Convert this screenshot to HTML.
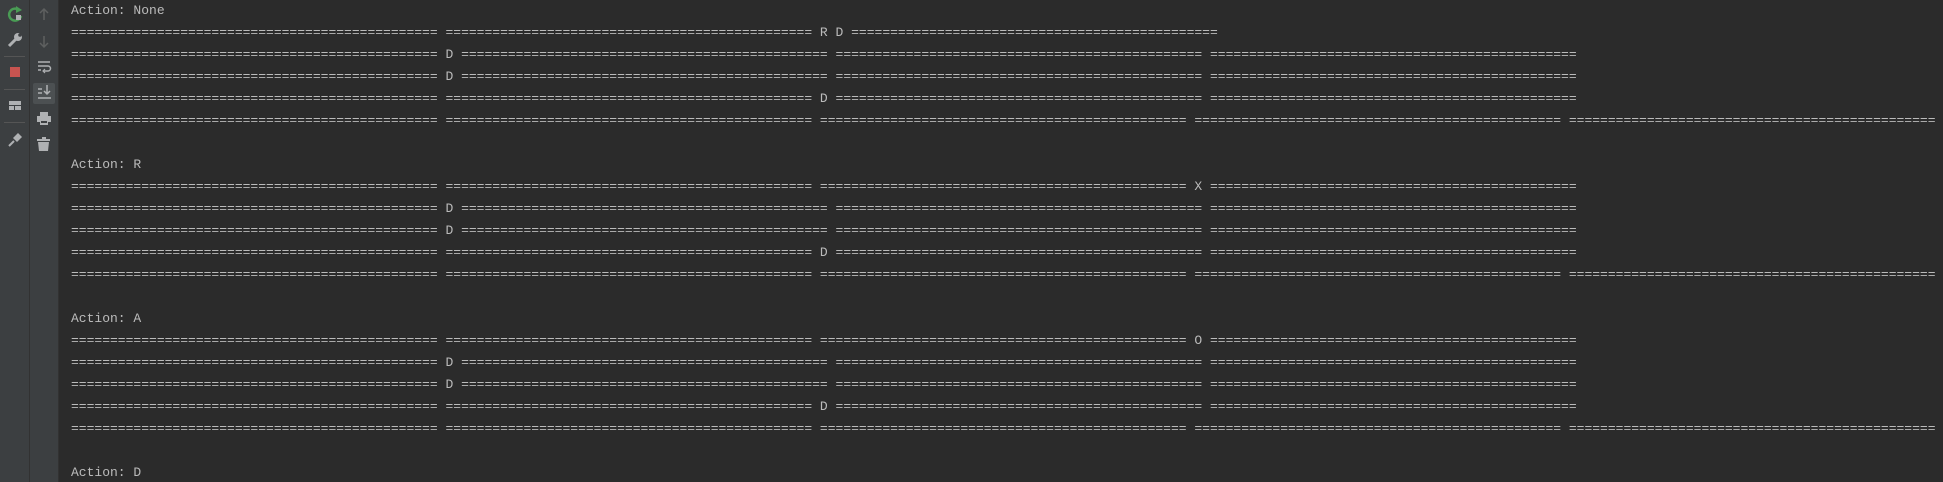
<!DOCTYPE html><html><head><style>
body{margin:0;width:1943px;height:482px;background:#2b2b2b;overflow:hidden;position:relative}
.b1{position:absolute;left:0;top:0;width:29px;height:482px;background:#3c3f41;border-right:1px solid #323232}
.b2{position:absolute;left:30px;top:0;width:28px;height:482px;background:#3c3f41;border-right:1px solid #323232}
pre{position:absolute;left:71px;top:0;width:1872px;height:482px;overflow:hidden;margin:0;font:13px/22px "Liberation Mono",monospace;color:#bbbbbb;white-space:pre}
svg{position:absolute;left:0;top:0}
</style></head><body>
<div class="b1"></div><div class="b2"></div>
<svg width="60" height="160">
<path d="M19 10 A6 6 0 1 0 21 16" stroke="#499c54" stroke-width="2.5" fill="none"/><path d="M16 6 L22 10 L16 13Z" fill="#499c54"/><rect x="16" y="15" width="5" height="5" fill="#afb1b3"/>
<path d="M9 46 L16 39" stroke="#afb1b3" stroke-width="3"/><circle cx="18" cy="37" r="4" fill="#afb1b3"/><circle cx="20" cy="35" r="1.8" fill="#3c3f41"/>
<rect x="4" y="56" width="21" height="1" fill="#555"/>
<rect x="10" y="67" width="10" height="10" fill="#c75450"/>
<rect x="4" y="89" width="21" height="1" fill="#555"/>
<rect x="9" y="101" width="12" height="4" fill="#afb1b3"/><rect x="9" y="106" width="5" height="4" fill="#afb1b3"/><rect x="15" y="106" width="6" height="4" fill="#afb1b3"/>
<rect x="4" y="122" width="21" height="1" fill="#555"/>
<path d="M9 146 L14 141" stroke="#afb1b3" stroke-width="2"/><path d="M13 138 L18 133 L22 137 L17 142Z" fill="#afb1b3"/>
<path d="M44 9 V20 M40 13 L44 9 L48 13" stroke="#5e6060" stroke-width="1.5" fill="none"/>
<path d="M44 36 V47 M40 43 L44 47 L48 43" stroke="#5e6060" stroke-width="1.5" fill="none"/>
<path d="M38 62 H50 M38 66 H48 A2.5 2.5 0 0 1 48 71 H44 M38 70 H41" stroke="#afb1b3" stroke-width="1.5" fill="none"/><path d="M45 69 L43 71 L45 73" stroke="#afb1b3" stroke-width="1.2" fill="none"/>
<rect x="33" y="83" width="22" height="21" rx="2" fill="#4c5052"/>
<path d="M38 89 H42 M38 93 H42 M38 98 H51 M47 85 V94 M44 91 L47 94 L50 91" stroke="#afb1b3" stroke-width="1.5" fill="none"/>
<rect x="40" y="112" width="8" height="4" fill="#afb1b3"/><rect x="37" y="116" width="14" height="6" fill="#afb1b3"/><rect x="40" y="120" width="8" height="5" fill="#afb1b3"/><rect x="41" y="121" width="6" height="2" fill="#3c3f41"/>
<rect x="37" y="139" width="13" height="2" fill="#afb1b3"/><rect x="42" y="137" width="4" height="2" fill="#afb1b3"/><path d="M38 142 H49 L48 151 H39Z" fill="#afb1b3"/>
</svg>
<pre id="o"></pre>
<script>
const E='='.repeat(47);
function r(a){return a.map(x=>x=='E'?E:x).join(' ')}
let L=[];
function blk(name,first){L.push('Action: '+name);L.push(r(first));L.push(r(['E','D','E','E','E']));L.push(r(['E','D','E','E','E']));L.push(r(['E','E','D','E','E']));L.push(r(['E','E','E','E','E']));L.push('');}
blk('None',['E','E','R','D','E']);
blk('R',['E','E','E','X','E']);
blk('A',['E','E','E','O','E']);
L.push('Action: D');
document.getElementById('o').textContent=L.join('\n');
</script>
</body></html>
